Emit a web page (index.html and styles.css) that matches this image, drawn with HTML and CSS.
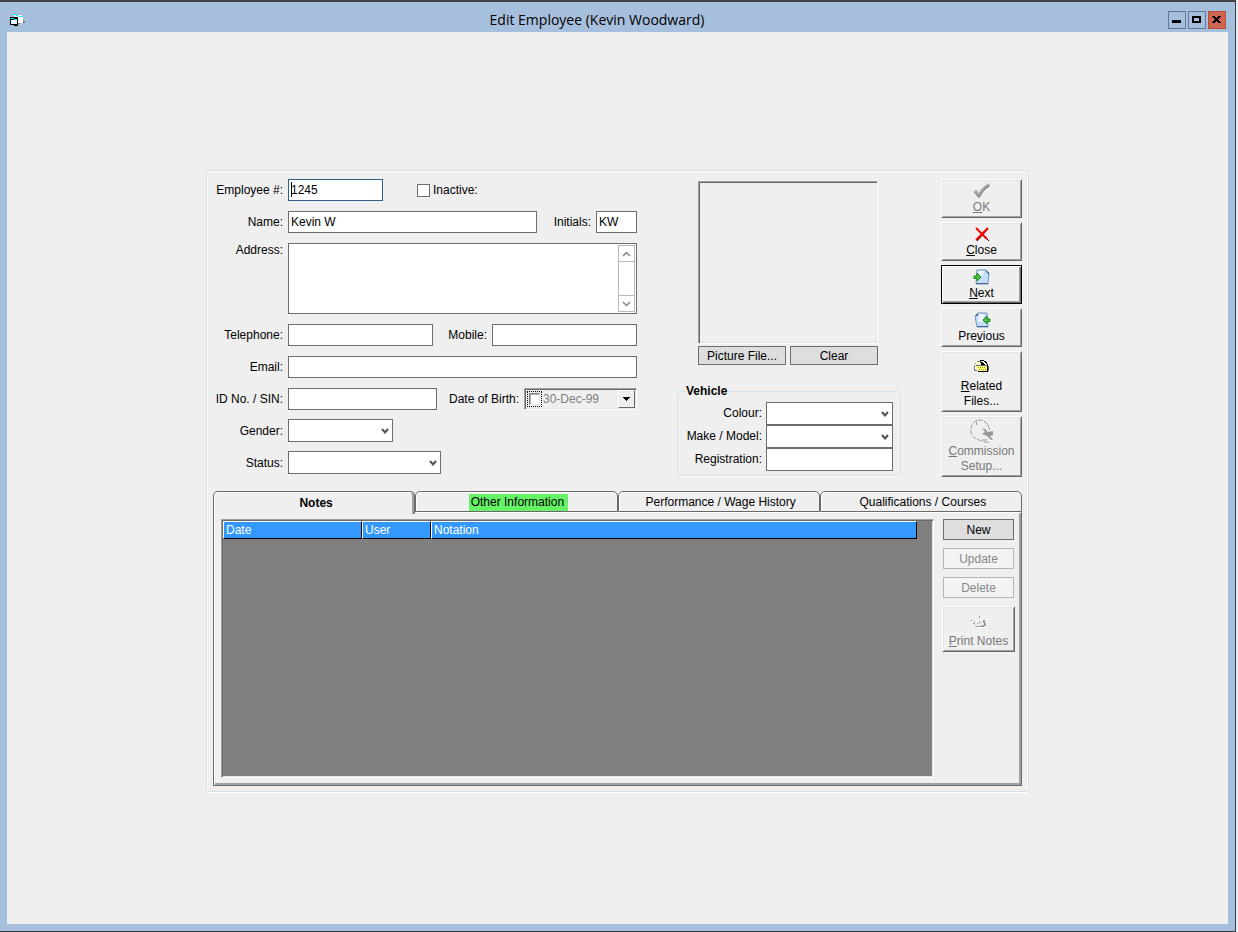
FILE: index.html
```html
<!DOCTYPE html>
<html lang="en">
<head>
    <meta charset="UTF-8">
    <meta name="viewport" content="width=device-width, initial-scale=1.0">
    <title>Edit Employee (Kevin Woodward)</title>
    <link rel="stylesheet" href="styles.css">
</head>
<body>
    <div class="window">
        <header class="titlebar">
            <svg class="app-icon" width="16" height="13" viewBox="0 0 16 13" shape-rendering="crispEdges" aria-hidden="true">
                <path fill="#fff" d="M4 1h8v2h1v6H7V5H4z"/>
                <path fill="#0ff" d="M3 0h3v1h2v1h4v1H9V2H6V1H3z"/>
                <path fill="#808080" d="M13 6h1v1h1v2h-2zM8 9h2v1H8z"/>
                <path fill="#000" d="M0 3h8v9H4v-1H0z"/>
                <path fill="#fff" d="M1 6h6v4H1z"/>
                <path fill="#0ff" d="M1 4h3v1h3v1H4V5H1z"/>
            </svg>
            <h1 class="title">Edit Employee (Kevin Woodward)</h1>
            <div class="window-buttons">
                <button class="window-button" type="button" aria-label="Minimize">
                    <svg width="16" height="16" shape-rendering="crispEdges"><path fill="#000" d="M3 8h9v3H3z"/></svg>
                </button>
                <button class="window-button" type="button" aria-label="Maximize">
                    <svg width="16" height="16" shape-rendering="crispEdges"><path fill="#000" fill-rule="evenodd" d="M3 4h9v7H3zM5 6v3h5V6z"/></svg>
                </button>
                <button class="window-button window-close" type="button" aria-label="Close window">
                    <svg width="16" height="16" shape-rendering="crispEdges"><path fill="#000" d="M3 4h3v1h1v1h1V5h1V4h3v1h-1v1h-1v1H9v1h1v1h1v1h1v1H9v-1H8V9H7v1H6v1H3v-1h1V9h1V8h1V7H5V6H4V5H3z"/></svg>
                </button>
            </div>
        </header>

        <main class="client">
            <form class="panel">
                <div class="top">
                    <div class="details">
                        <div class="row">
                            <label class="row-label" for="employeeNo">Employee #:</label>
                            <input class="field field-number has-caret" type="text" id="employeeNo" value="1245">
                            <input class="check" type="checkbox" id="inactive">
                            <label for="inactive">Inactive:</label>
                        </div>
                        <div class="row">
                            <label class="row-label" for="name">Name:</label>
                            <input class="field field-name" type="text" id="name" value="Kevin W">
                            <label class="second-label" for="initials">Initials:</label>
                            <input class="field field-initials" type="text" id="initials" value="KW">
                        </div>
                        <div class="row row-top">
                            <label class="row-label" for="address">Address:</label>
                            <div class="memo">
                                <textarea class="memo-text" id="address"></textarea>
                                <div class="scrollbar">
                                    <button class="scroll-button" type="button" aria-label="Scroll up">
                                        <svg width="9" height="6"><path class="chevron-thin" d="M1 5l3.500-3.500L8 5"/></svg>
                                    </button>
                                    <button class="scroll-button" type="button" aria-label="Scroll down">
                                        <svg width="9" height="6"><path class="chevron-thin" d="M1 1l3.500 3.500L8 1"/></svg>
                                    </button>
                                </div>
                            </div>
                        </div>
                        <div class="row">
                            <label class="row-label" for="telephone">Telephone:</label>
                            <input class="field field-phone" type="text" id="telephone">
                            <label class="second-label" for="mobile">Mobile:</label>
                            <input class="field field-phone" type="text" id="mobile">
                        </div>
                        <div class="row">
                            <label class="row-label" for="email">Email:</label>
                            <input class="field field-wide" type="text" id="email">
                        </div>
                        <div class="row">
                            <label class="row-label" for="idNo">ID No. / SIN:</label>
                            <input class="field field-id" type="text" id="idNo">
                            <label class="second-label" for="birthDate">Date of Birth:</label>
                            <div class="date-picker">
                                <span class="date-focus"><input class="date-check" type="checkbox" aria-label="Use date of birth"></span>
                                <input class="date-text" type="text" id="birthDate" value="30-Dec-99" disabled>
                                <button class="date-button" type="button" aria-label="Open calendar">
                                    <svg width="7" height="4" shape-rendering="crispEdges"><path fill="#000" d="M0 0h7v1H6v1H5v1H4v1H3V3H2V2H1V1H0z"/></svg>
                                </button>
                            </div>
                        </div>
                        <div class="row">
                            <label class="row-label" for="gender">Gender:</label>
                            <div class="combo combo-gender">
                                <select id="gender"><option></option></select>
                                <svg width="8" height="7"><path class="chevron" d="M1 1l3 3.500L7 1"/></svg>
                            </div>
                        </div>
                        <div class="row">
                            <label class="row-label" for="status">Status:</label>
                            <div class="combo combo-status">
                                <select id="status"><option></option></select>
                                <svg width="8" height="7"><path class="chevron" d="M1 1l3 3.500L7 1"/></svg>
                            </div>
                        </div>
                    </div>

                    <div class="middle">
                        <div class="picture"></div>
                        <div class="picture-buttons">
                            <button class="flat-button" type="button">Picture File...</button>
                            <button class="flat-button" type="button">Clear</button>
                        </div>
                        <fieldset class="vehicle">
                            <legend>Vehicle</legend>
                            <div class="vehicle-row">
                                <label for="colour">Colour:</label>
                                <div class="combo">
                                    <select id="colour"><option></option></select>
                                    <svg width="8" height="7"><path class="chevron" d="M1 1l3 3.500L7 1"/></svg>
                                </div>
                            </div>
                            <div class="vehicle-row">
                                <label for="model">Make / Model:</label>
                                <div class="combo">
                                    <select id="model"><option></option></select>
                                    <svg width="8" height="7"><path class="chevron" d="M1 1l3 3.500L7 1"/></svg>
                                </div>
                            </div>
                            <div class="vehicle-row">
                                <label for="registration">Registration:</label>
                                <input class="field" type="text" id="registration">
                            </div>
                        </fieldset>
                    </div>

                    <div class="actions">
                        <button class="raised" type="button" disabled>
                            <svg width="18" height="16" viewBox="0 0 18 16">
                                <path fill="none" stroke="#777" stroke-width="3" stroke-linejoin="round" d="M2 8l4 5Q9 6 16 2"/>
                                <path fill="none" stroke="#aaa" stroke-width="2" d="M2 8l4 4Q9 6 16 1"/>
                            </svg>
                            <span><u>O</u>K</span>
                        </button>
                        <button class="raised" type="button">
                            <svg width="16" height="16" viewBox="0 0 16 16">
                                <path fill="none" stroke="#000" d="M3 3l12 12M14 3L3 15"/>
                                <path fill="none" stroke="#f00" stroke-width="2" d="M2 2l11 11M14 2L2 14"/>
                            </svg>
                            <span><u>C</u>lose</span>
                        </button>
                        <button class="raised raised-default" type="button">
                            <svg width="18" height="16" viewBox="0 0 18 16">
                                <path fill="#c5def8" stroke="#7093bd" d="M4 1h9l3 3-1 11H3z"/>
                                <path fill="#eef7ff" d="M5 2h6l-1 5H5z"/>
                                <path fill="#456b98" d="M12 1l4 3v2l-2-2zM3 14h12v1H3z"/>
                                <path fill="#50c83c" stroke="#18831b" d="M1 7h3V4l4 4-4 4V9.500H1z"/>
                            </svg>
                            <span><u>N</u>ext</span>
                        </button>
                        <button class="raised" type="button">
                            <svg width="18" height="16" viewBox="0 0 18 16">
                                <path fill="#c5def8" stroke="#7093bd" d="M5 1h9l1 14H4L2 4z"/>
                                <path fill="#eef7ff" d="M6 2h5v6l-6 2z"/>
                                <path fill="#456b98" d="M2 4l3-3v3zM4 14h11v1H4z"/>
                                <path fill="#50c83c" stroke="#18831b" d="M17 7h-3V4l-4 4 4 4V9.500h3z"/>
                            </svg>
                            <span>Pre<u>v</u>ious</span>
                        </button>
                        <button class="raised raised-tall" type="button">
                            <svg width="16" height="20" viewBox="0 0 16 20" shape-rendering="crispEdges">
                                <path fill="#808060" d="M3 3h3v1h2v1H2v1H1v7H0V7h1V5h2z"/>
                                <path fill="#ffffc0" d="M3 4h3v1h2v1H2v1h1v1H1V7h1V5h1z"/>
                                <path fill="#000" d="M6 2h4v1h2v1h1v2h1v2h1v5h-1v1H4v-1h9V8H6V7h1V4H6z"/>
                                <path fill="#fff" d="M7 3h3v1h1v1h1v1h1v1h-2V6h-1V5H9V4H7zM1 7h2v5H1z"/>
                                <path fill="#ff8" d="M2 8h11v5H4v-1H3v-2H2z"/>
                                <path fill="#a09000" d="M4 9h1v1H4zM6 9h1v1H6zM8 9h1v1H8zM10 9h1v1h-1zM5 11h1v1H5zM7 11h1v1H7zM9 11h1v1H9zM11 11h1v1h-1z"/>
                                <path fill="#606060" d="M2 7h11v1H2zM14 8h1v5h-1zM1 12h2v1H1z"/>
                            </svg>
                            <span><u>R</u>elated<br>Files...</span>
                        </button>
                        <button class="raised raised-tall" type="button" disabled>
                            <svg width="24" height="24" viewBox="0 0 24 24">
                                <path fill="none" stroke="#fff" d="M8 2Q2 5 2 12T11 23M10 2q9 0 11 10M15 22l7-1"/>
                                <path fill="none" stroke="#999" stroke-dasharray="5 1" d="M7 1Q1 5 1 11t4 8 8 4M8 1q10 0 12 11M14 2l5 5M6 2l1 4"/>
                                <path fill="#999" d="M12 9l3 1 3 3 5-1v4l-3 1 3 4h-2l-4-4-5-2 3-2z"/>
                                <path fill="none" stroke="#999" d="M12 21h5M14 23h5"/>
                            </svg>
                            <span><u>C</u>ommission<br>Setup...</span>
                        </button>
                    </div>
                </div>

                <div class="tabs" role="tablist">
                    <button class="tab tab-active" type="button" role="tab" aria-selected="true">Notes</button>
                    <button class="tab" type="button" role="tab"><span class="highlight">Other Information</span></button>
                    <button class="tab" type="button" role="tab">Performance / Wage History</button>
                    <button class="tab" type="button" role="tab">Qualifications / Courses</button>
                </div>
                <div class="tab-body" role="tabpanel">
                    <div class="grid">
                        <table class="notes">
                            <thead>
                                <tr>
                                    <th class="col-date">Date</th>
                                    <th class="col-user">User</th>
                                    <th>Notation</th>
                                </tr>
                            </thead>
                            <tbody></tbody>
                        </table>
                    </div>
                    <div class="notes-buttons">
                        <button class="flat-button" type="button">New</button>
                        <button class="flat-button" type="button" disabled>Update</button>
                        <button class="flat-button" type="button" disabled>Delete</button>
                        <button class="raised raised-print" type="button" disabled>
                            <svg width="16" height="20" viewBox="0 0 16 20" shape-rendering="crispEdges">
                                <path fill="#fff" d="M5 14h11v1H5zM15 9h1v5h-1zM9 4h1v2H9z"/>
                                <path fill="#999" d="M8 3h1v2H8zM0 7h1v1H0zM3 8h1v1H3zM2 10h2v1H2zM6 10h1v1H6zM12 7h2v3h1v3h-4v-1h2v-2h-1zM8 9h2v1H8zM5 13h8v1H5zM4 12h1v1H4z"/>
                            </svg>
                            <span><u>P</u>rint Notes</span>
                        </button>
                    </div>
                </div>
            </form>
        </main>
    </div>
</body>
</html>
```
FILE: styles.css
```css
* {
    box-sizing: border-box;
}
body {
    margin: 0;
    background-color: #efefef;
    color: #000;
    font-family: "Liberation Sans", Arial, sans-serif;
    font-size: 12px;
    line-height: 15px;
}
button, input, select, textarea {
    margin: 0;
    font: inherit;
    color: inherit;
}
button {
    padding: 0;
}

/* Window frame */
.window {
    display: flex;
    flex-direction: column;
    min-height: 100vh;
    margin-right: 2px;
    padding: 0 7px 7px;
    border-top: 2px solid #444;
    border-right: 1px solid #333940;
    border-bottom: 1px solid #333940;
    background-color: #a6bfdc;
}
.titlebar {
    display: flex;
    align-items: center;
    height: 30px;
    padding: 6px 2px 0 3px;
}
.title {
    flex: 1;
    margin: 0;
    font-family: "Open Sans", "Noto Sans", sans-serif;
    font-size: 14px;
    font-weight: 400;
    line-height: 18px;
    text-align: center;
}
.window-buttons {
    display: flex;
    gap: 2px;
}
.window-button {
    width: 18px;
    height: 18px;
    border: 1px solid #64779b;
    background-color: #a6bfdc;
}
.window-button svg {
    display: block;
}
.window-close {
    border-color: #b8503c;
    background-color: #cf6650;
}
.client {
    flex: 1;
    padding: 138px 0 40px;
    background-color: #efefef;
}

/* Form panel */
.panel {
    width: 823px;
    max-width: 100%;
    margin: 0 auto;
    padding: 8px 6px 5px;
    border: 1px solid #d5dfe9;
    border-radius: 3px;
    box-shadow: inset 1px 1px #fff, inset -1px 0 #fff, 0 1px #fff;
}
.top {
    display: flex;
    justify-content: space-between;
    margin-bottom: 14px;
}
.details {
    display: flex;
    flex-direction: column;
    gap: 10px;
    width: 424px;
}
.row {
    display: flex;
    align-items: center;
    gap: 5px;
}
.row-top {
    align-items: flex-start;
}
.row-label {
    width: 70px;
    text-align: right;
    white-space: nowrap;
}
.second-label {
    margin-left: auto;
}
.field {
    height: 22px;
    padding: 0 2px;
    border: 1px solid #6d6d6d;
    background-color: #fff;
    outline: none;
}
.field-number {
    width: 95px;
    border-color: #2b5f8c;
}
.has-caret {
    background: linear-gradient(#000, #000) 2px 2px / 1px 15px no-repeat #fff;
}
.field-name {
    width: 249px;
}
.field-initials {
    width: 41px;
}
.field-phone {
    width: 145px;
}
.field-wide {
    flex: 1;
}
.field-id {
    width: 149px;
}
.check {
    width: 13px;
    height: 13px;
    margin: 0 -2px 0 29px;
    border: 1px solid #6d6d6d;
    background-color: #fff;
    appearance: none;
}

/* Address box */
.memo {
    display: flex;
    flex: 1;
    height: 71px;
    padding: 1px;
    border: 1px solid #6d6d6d;
    background-color: #fff;
}
.memo-text {
    flex: 1;
    padding: 0;
    border: none;
    outline: none;
    resize: none;
}
.scrollbar {
    display: flex;
    flex-direction: column;
    justify-content: space-between;
    width: 17px;
    border: 1px solid #b8b8b8;
}
.scroll-button {
    display: flex;
    align-items: center;
    justify-content: center;
    height: 16px;
    border: solid #b8b8b8;
    border-width: 0 0 1px;
    background-color: #fff;
}
.scroll-button:last-child {
    border-width: 1px 0 0;
}
.chevron-thin {
    fill: none;
    stroke: #888;
    stroke-width: 1.5;
}
.chevron {
    fill: none;
    stroke: #505050;
    stroke-width: 2;
}

/* Drop-downs */
.combo {
    position: relative;
}
.details .combo {
    margin-top: -1px;
}
.combo select {
    display: block;
    width: 100%;
    height: 23px;
    padding: 0 18px 0 2px;
    border: 1px solid #6d6d6d;
    border-radius: 0;
    background-color: #fff;
    appearance: none;
}
.combo svg {
    position: absolute;
    top: 9px;
    right: 4px;
    pointer-events: none;
}
.combo-gender {
    width: 105px;
}
.combo-status {
    width: 153px;
}

/* Date of birth */
.date-picker {
    display: flex;
    align-items: center;
    width: 113px;
    height: 22px;
    border: 1px solid;
    border-color: #a0a0a0 #fff #fff #a0a0a0;
    background-color: #efefef;
    box-shadow: inset 1px 1px #696969, inset -1px -1px #e3e3e3;
}
.date-focus {
    padding: 1px;
    margin-left: 2px;
    border: 1px dotted #000;
}
.date-check {
    display: block;
    width: 11px;
    height: 12px;
    border: 1px solid;
    border-color: #808080 #e3e3e3 #e3e3e3 #808080;
    background-color: #fff;
    box-shadow: inset 1px 1px #b0b0b0;
    appearance: none;
}
.date-text {
    flex: 1;
    min-width: 0;
    padding: 0 0 0 1px;
    border: none;
    background: none;
    color: #808080;
}
.date-button {
    display: flex;
    align-items: center;
    justify-content: center;
    width: 17px;
    height: 18px;
    margin-right: 1px;
    border: 1px solid;
    border-color: #fff #696969 #696969 #fff;
    background-color: #efefef;
}

/* Picture and vehicle */
.middle {
    width: 224px;
    padding-top: 2px;
}
.picture {
    width: 180px;
    height: 163px;
    margin: 0 21px 2px;
    border: 1px solid;
    border-color: #a0a0a0 #fff #fff #a0a0a0;
    box-shadow: inset 1px 1px #696969, inset -1px -1px #e3e3e3;
}
.picture-buttons {
    display: flex;
    gap: 4px;
    width: 180px;
    margin: 0 21px 19px;
}
.picture-buttons .flat-button {
    flex: 1;
    height: 19px;
}
.flat-button {
    padding-top: 1px;
    border: 1px solid #6d6d6d;
    background-color: #dedede;
}
.flat-button:disabled {
    border-color: #b5b5b5;
    background-color: #f3f3f3;
    color: #888;
}
.vehicle {
    margin: 0;
    padding: 3px 7px 4px;
    border: 1px solid #d5dfe9;
    border-radius: 4px;
    box-shadow: 0 1px #fff;
}
.vehicle legend {
    padding: 0 2px 0 1px;
    font-weight: 700;
}
.vehicle-row {
    display: flex;
    align-items: center;
    justify-content: flex-end;
    gap: 4px;
}
.vehicle-row .combo, .vehicle-row .field {
    width: 127px;
    height: 23px;
}

/* Command buttons */
.actions {
    display: flex;
    flex-direction: column;
    gap: 4px;
    width: 81px;
}
.raised {
    display: flex;
    flex-direction: column;
    align-items: center;
    justify-content: flex-end;
    gap: 1px;
    height: 39px;
    padding-bottom: 2px;
    border: 1px solid;
    border-color: #fff #696969 #696969 #fff;
    background-color: #efefef;
    box-shadow: inset 1px 1px #e3e3e3, inset -1px -1px #a0a0a0;
}
.raised:disabled {
    color: #777;
}
.raised-default {
    border-color: #000;
    box-shadow: inset 1px 1px #fff, inset -1px -1px #696969, inset -2px -2px #a0a0a0;
}
.raised-tall {
    height: 61px;
}

/* Tabs */
.tabs {
    display: flex;
    height: 21px;
}
.tab {
    flex: 1;
    padding: 1px 0 0 4px;
    border: 1px solid #696969;
    border-radius: 5px 5px 0 0;
    background-color: #efefef;
    box-shadow: inset 1px 1px #fff;
}
.tab-active {
    position: relative;
    height: 23px;
    border-bottom: none;
    font-weight: 700;
    box-shadow: inset 1px 1px #fff, inset -2px 0 #a0a0a0;
}
.highlight {
    display: inline-block;
    padding: 1px 4px 1px 2px;
    background-color: #66f266;
}
.tab-body {
    display: flex;
    gap: 8px;
    padding: 7px 6px 7px 7px;
    border: 1px solid #696969;
    border-top: none;
    box-shadow: inset 1px 1px #fff, inset -2px -2px #a0a0a0;
}
.grid {
    flex: 1;
    min-height: 259px;
    padding: 1px;
    border: 1px solid;
    border-color: #a0a0a0 #fff #fff #a0a0a0;
    background-color: #808080;
    box-shadow: inset 1px 1px #696969, inset -1px -1px #e3e3e3;
}
.notes {
    width: 694px;
    max-width: 100%;
    border-collapse: separate;
    border-spacing: 0;
    table-layout: fixed;
}
.notes th {
    height: 18px;
    padding: 0 2px;
    border: 1px solid;
    border-color: #fff #000 #000 #fff;
    background-color: #3399ff;
    color: #fff;
    font-weight: 400;
    text-align: left;
}
.col-date {
    width: 139px;
}
.col-user {
    width: 69px;
}
.notes-buttons {
    display: flex;
    flex-direction: column;
    gap: 8px;
    width: 73px;
}
.notes-buttons .flat-button {
    height: 21px;
    margin: 0 1px;
}
.raised-print {
    height: 46px;
}
```
